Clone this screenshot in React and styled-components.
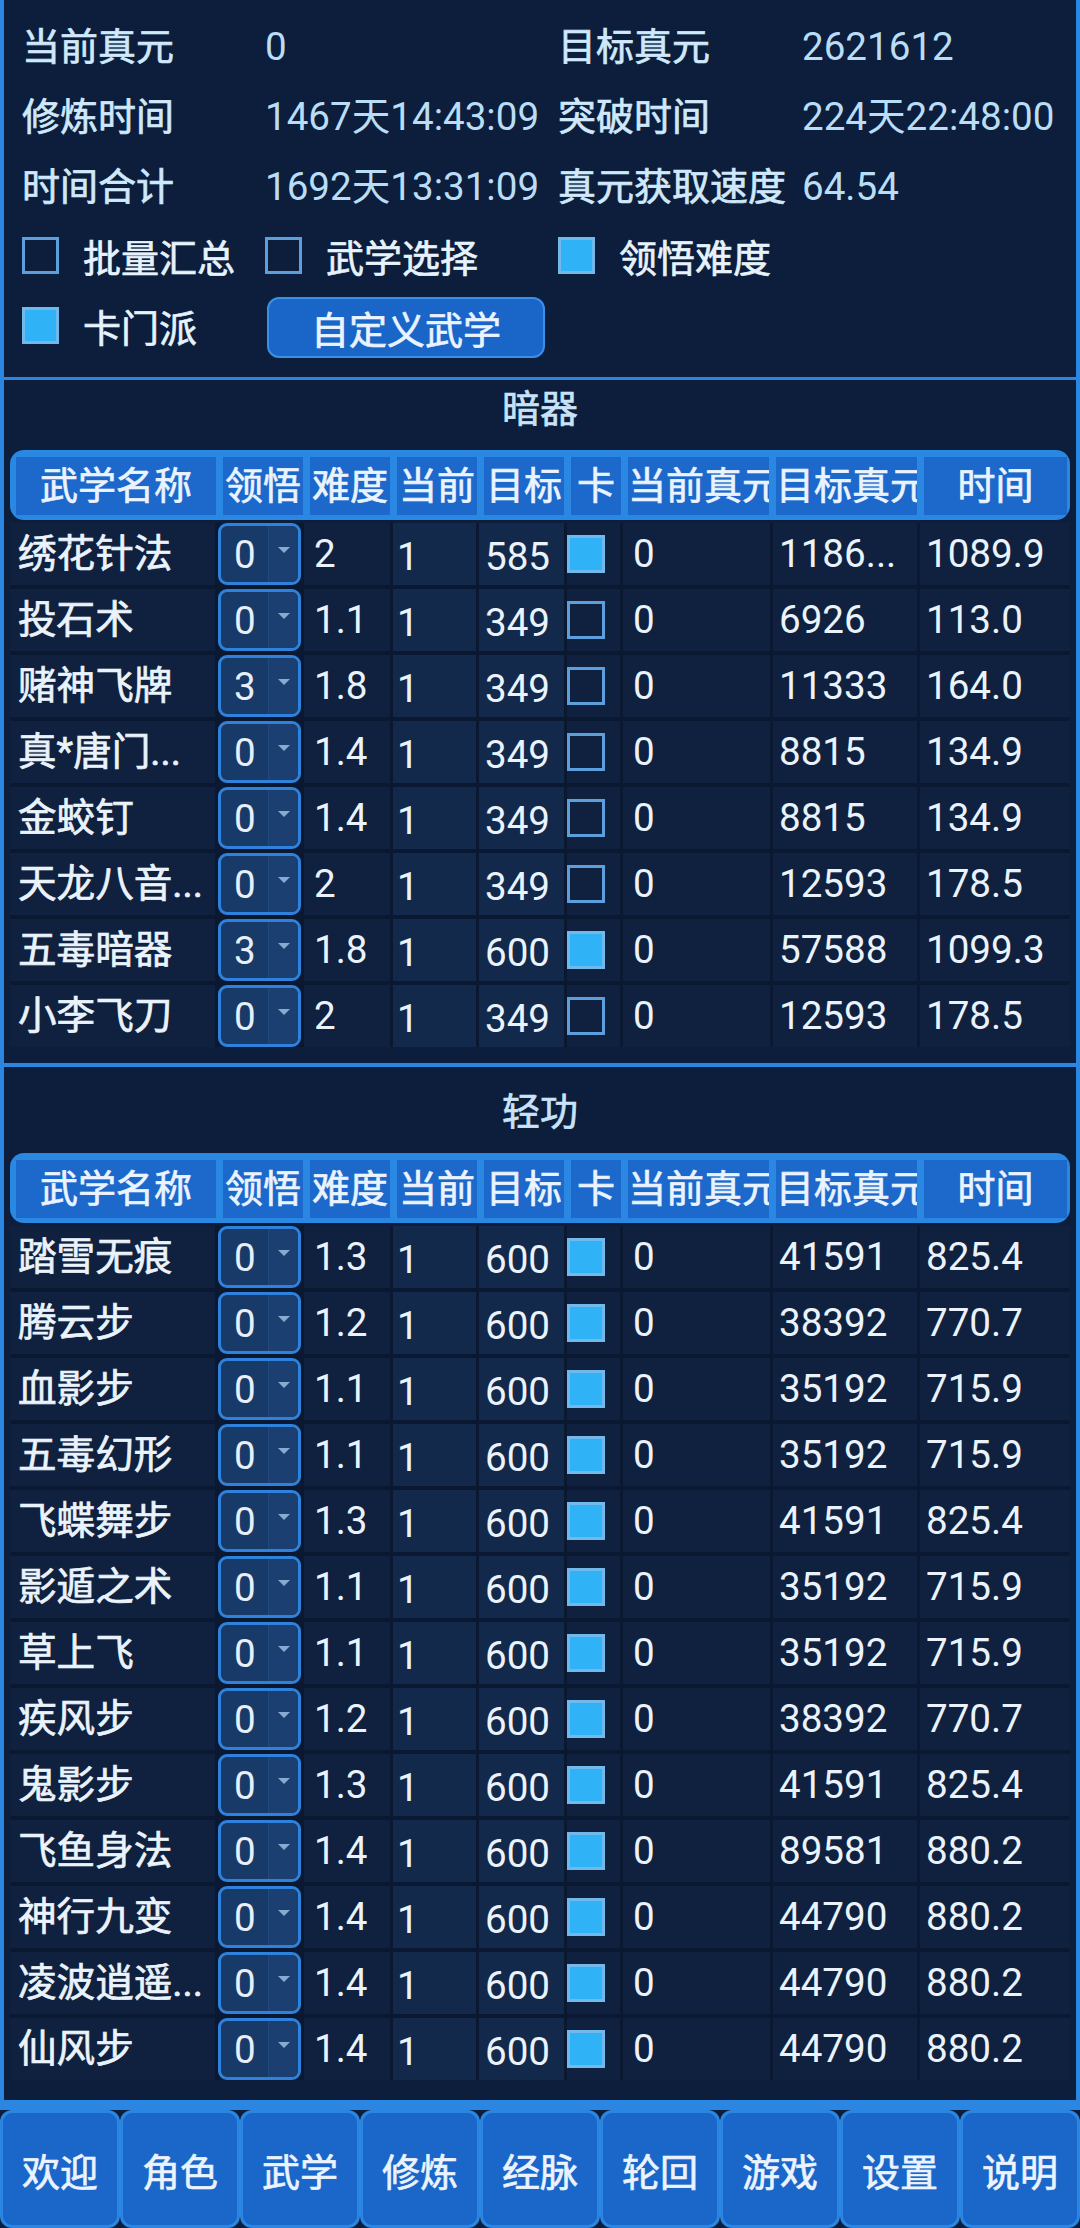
import React from 'react';
import styled, { createGlobalStyle, css } from 'styled-components';

const GlobalStyle = createGlobalStyle`
  html, body { margin: 0; padding: 0; background: #0c1e3b; }
  body { font-family: Roboto, "Noto Sans CJK SC", sans-serif; }
  * { box-sizing: border-box; }
`;

const heavy = css`
  -webkit-text-stroke: 0.7px currentColor;
`;

const Page = styled.div`
  width: 1080px;
  height: 2228px;
  display: flex;
  flex-direction: column;
  background: #0c1e3b;
  overflow: hidden;
`;

const Frame = styled.div`
  flex: 1;
  display: flex;
  flex-direction: column;
  border-left: 4px solid #2a86e0;
  border-right: 4px solid #2a86e0;
  border-bottom: 10px solid #2a86e0;
`;

const Info = styled.div`
  display: grid;
  grid-template-columns: 243px 293px 244px 1fr;
  grid-auto-rows: 70px;
  align-items: center;
  padding: 12px 0 15px 18px;
`;

const Label = styled.div`
  font-size: 38px;
  line-height: 1;
  color: #cfe8fb;
  white-space: nowrap;
  ${heavy}
`;

const Value = styled.div`
  font-size: 38.6px;
  line-height: 1;
  color: #b9ddf6;
  white-space: nowrap;
`;

const CheckItem = styled.div`
  display: flex;
  align-items: center;
  gap: 24px;
  margin-top: -4px;
  font-size: 38px;
  color: #e6f2fc;
  white-space: nowrap;
  ${heavy}
`;

const Box = styled.span`
  display: inline-block;
  flex: none;
  width: ${p => p.$size}px;
  height: ${p => p.$size}px;
  border: 3px solid ${p => (p.$checked ? '#72b8ea' : '#5c9fdc')};
  background: ${p => (p.$checked ? '#30b2f6' : 'transparent')};
  -webkit-text-stroke: 0;
`;

const ActionButton = styled.button`
  width: 278px;
  height: 61px;
  margin-left: 2px;
  border: 2px solid #3b8fe6;
  border-radius: 12px;
  background: #1a66c8;
  color: #eaf3ff;
  font-family: inherit;
  font-size: 38px;
  padding: 0;
  display: flex;
  align-items: center;
  justify-content: center;
  ${heavy}
`;

const Section = styled.section`
  display: flex;
  flex-direction: column;
  border-top: ${p => (p.$top ? '3px solid #2a86e0' : 'none')};
  border-bottom: ${p => (p.$bottom ? '4px solid #2a86e0' : 'none')};
  padding-top: ${p => p.$padTop}px;
  padding-bottom: 16px;
`;

const Title = styled.div`
  height: 70px;
  padding-bottom: 20px;
  display: flex;
  align-items: center;
  justify-content: center;
  font-size: 38px;
  color: #c8e3f8;
  ${heavy}
`;

const HeaderBar = styled.div`
  margin: 0 6px;
  height: 70px;
  padding: 7px 3px 5px 6px;
  border-radius: 14px;
  background: #2a87e2;
  display: grid;
  grid-template-columns: 200px 80px 80px 80px 80px 50px 141px 141px 1fr;
  column-gap: 7px;
`;

const HeaderCell = styled.div`
  background: #1c69cb;
  color: #eaf3ff;
  font-size: 38px;
  line-height: 58px;
  text-align: center;
  white-space: nowrap;
  overflow: hidden;
  ${heavy}
`;

const Body = styled.div`
  margin: 3px 6px 0;
  display: flex;
  flex-direction: column;
  gap: 4px;
  background: #0a1831;
`;

const Row = styled.div`
  height: 62px;
  display: grid;
  grid-template-columns: 205px 83px 86px 83px 85px 53px 147px 144px 1fr;
  column-gap: 3px;
`;

const Cell = styled.div`
  background: ${p => (p.$alt ? '#13294b' : '#0f213f')};
  color: #eaf3fb;
  font-size: 38.6px;
  line-height: 1;
  display: flex;
  align-items: center;
  padding-left: ${p => p.$pad ?? 6}px;
  padding-top: ${p => (p.$low ? 6 : 0)}px;
  white-space: nowrap;
  overflow: hidden;
  ${p => p.$name && heavy}
`;

const Select = styled.div`
  display: flex;
  border: 3px solid #2f82dc;
  border-radius: 9px;
  background: #183a68;
  overflow: hidden;
`;

const SelectValue = styled.div`
  flex: 1;
  display: flex;
  align-items: center;
  padding-left: 13px;
  font-size: 38.6px;
  color: #e6effa;
`;

const SelectArrow = styled.div`
  width: 30px;
  background: #1b3f71;
  border-left: 1px solid #22497e;
  display: flex;
  align-items: center;
  justify-content: center;
  &::after {
    content: '';
    margin-bottom: 8px;
    border-left: 6px solid transparent;
    border-right: 6px solid transparent;
    border-top: 6px solid #8aa9d2;
  }
`;

const Nav = styled.nav`
  height: 118px;
  display: grid;
  grid-template-columns: repeat(9, 1fr);
  background: #0c1e3b;
`;

const NavButton = styled.button`
  border: 3px solid #2b86e2;
  border-radius: 12px;
  background: #1b67c9;
  color: #eaf3ff;
  font-family: inherit;
  font-size: 38px;
  padding: 0;
  display: flex;
  align-items: center;
  justify-content: center;
  ${heavy}
`;

const headers = ['武学名称', '领悟', '难度', '当前', '目标', '卡', '当前真元', '目标真元', '时间'];

const anqi = [
  ['绣花针法', '0', '2', '1', '585', true, '0', '1186...', '1089.9'],
  ['投石术', '0', '1.1', '1', '349', false, '0', '6926', '113.0'],
  ['赌神飞牌', '3', '1.8', '1', '349', false, '0', '11333', '164.0'],
  ['真*唐门...', '0', '1.4', '1', '349', false, '0', '8815', '134.9'],
  ['金蛟钉', '0', '1.4', '1', '349', false, '0', '8815', '134.9'],
  ['天龙八音...', '0', '2', '1', '349', false, '0', '12593', '178.5'],
  ['五毒暗器', '3', '1.8', '1', '600', true, '0', '57588', '1099.3'],
  ['小李飞刀', '0', '2', '1', '349', false, '0', '12593', '178.5'],
];

const qinggong = [
  ['踏雪无痕', '1.3', '41591', '825.4'],
  ['腾云步', '1.2', '38392', '770.7'],
  ['血影步', '1.1', '35192', '715.9'],
  ['五毒幻形', '1.1', '35192', '715.9'],
  ['飞蝶舞步', '1.3', '41591', '825.4'],
  ['影遁之术', '1.1', '35192', '715.9'],
  ['草上飞', '1.1', '35192', '715.9'],
  ['疾风步', '1.2', '38392', '770.7'],
  ['鬼影步', '1.3', '41591', '825.4'],
  ['飞鱼身法', '1.4', '89581', '880.2'],
  ['神行九变', '1.4', '44790', '880.2'],
  ['凌波逍遥...', '1.4', '44790', '880.2'],
  ['仙风步', '1.4', '44790', '880.2'],
].map(([n, d, t, time]) => [n, '0', d, '1', '600', true, '0', t, time]);

const navItems = ['欢迎', '角色', '武学', '修炼', '经脉', '轮回', '游戏', '设置', '说明'];

function SkillTable({ title, rows, top, bottom, padTop }) {
  return (
    <Section $top={top} $bottom={bottom} $padTop={padTop}>
      <Title>{title}</Title>
      <HeaderBar>
        {headers.map(h => (
          <HeaderCell key={h}>{h}</HeaderCell>
        ))}
      </HeaderBar>
      <Body>
        {rows.map(([name, wu, diff, cur, target, card, curZ, targetZ, time], i) => (
          <Row key={i}>
            <Cell $name $pad={8}>{name}</Cell>
            <Select>
              <SelectValue>{wu}</SelectValue>
              <SelectArrow />
            </Select>
            <Cell $pad={10}>{diff}</Cell>
            <Cell $alt $low $pad={4}>{cur}</Cell>
            <Cell $alt $low $pad={6}>{target}</Cell>
            <Cell $pad={0}>
              <Box $size={38} $checked={card} />
            </Cell>
            <Cell $pad={10}>{curZ}</Cell>
            <Cell $pad={6}>{targetZ}</Cell>
            <Cell $pad={6}>{time}</Cell>
          </Row>
        ))}
      </Body>
    </Section>
  );
}

export default function App() {
  return (
    <Page>
      <GlobalStyle />
      <Frame>
        <Info>
          <Label>当前真元</Label>
          <Value>0</Value>
          <Label>目标真元</Label>
          <Value>2621612</Value>
          <Label>修炼时间</Label>
          <Value>1467天14:43:09</Value>
          <Label>突破时间</Label>
          <Value>224天22:48:00</Value>
          <Label>时间合计</Label>
          <Value>1692天13:31:09</Value>
          <Label>真元获取速度</Label>
          <Value>64.54</Value>
          <CheckItem>
            <Box $size={37} />
            批量汇总
          </CheckItem>
          <CheckItem>
            <Box $size={37} />
            武学选择
          </CheckItem>
          <CheckItem>
            <Box $size={37} $checked />
            领悟难度
          </CheckItem>
          <div />
          <CheckItem>
            <Box $size={37} $checked />
            卡门派
          </CheckItem>
          <ActionButton>自定义武学</ActionButton>
        </Info>
        <SkillTable title="暗器" rows={anqi} top bottom padTop={0} />
        <SkillTable title="轻功" rows={qinggong} padTop={16} />
      </Frame>
      <Nav>
        {navItems.map(n => (
          <NavButton key={n}>{n}</NavButton>
        ))}
      </Nav>
    </Page>
  );
}
